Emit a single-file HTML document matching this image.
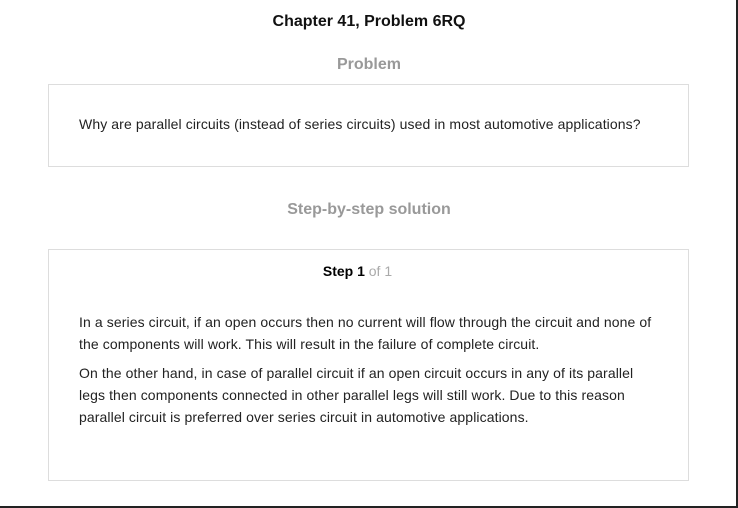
<!DOCTYPE html><html><head><style>
body{margin:0;width:738px;height:508px;position:relative;background:#fff;font-family:"Liberation Sans",Arial,sans-serif;overflow:hidden}
.frame{position:absolute;left:0;top:0;width:736px;height:506px;border-right:2px solid #222;border-bottom:2px solid #222}
.t{position:absolute;left:0;width:738px;text-align:center;font-weight:bold}
.box{position:absolute;left:48px;width:641px;border:1px solid #ddd;box-sizing:border-box}
p{margin:0;font-size:14px;color:#222;line-height:22px;letter-spacing:0.1px}
</style></head><body><div class="frame"></div>
<div class="t" style="top:13px;font-size:16px;color:#111">Chapter 41, Problem 6RQ</div>
<div class="t" style="top:56px;font-size:16px;color:#999">Problem</div>
<div class="box" style="top:84px;height:83px"><p style="position:absolute;left:30px;top:28px;white-space:nowrap">Why are parallel circuits (instead of series circuits) used in most automotive applications?</p></div>
<div class="t" style="top:201px;font-size:16px;color:#999">Step-by-step solution</div>
<div class="box" style="top:249px;height:232px">
<div style="position:absolute;left:0;width:617px;top:13px;text-align:center;font-size:14px"><b>Step 1</b> <span style="color:#aaa">of 1</span></div>
<div style="position:absolute;left:30px;width:578px;top:61px">
<p>In a series circuit, if an open occurs then no current will flow through the circuit and none of the components will work. This will result in the failure of complete circuit.</p>
<p style="margin-top:7px">On the other hand, in case of parallel circuit if an open circuit occurs in any of its parallel legs then components connected in other parallel legs will still work. Due to this reason parallel circuit is preferred over series circuit in automotive applications.</p>
</div></div>
</body></html>
